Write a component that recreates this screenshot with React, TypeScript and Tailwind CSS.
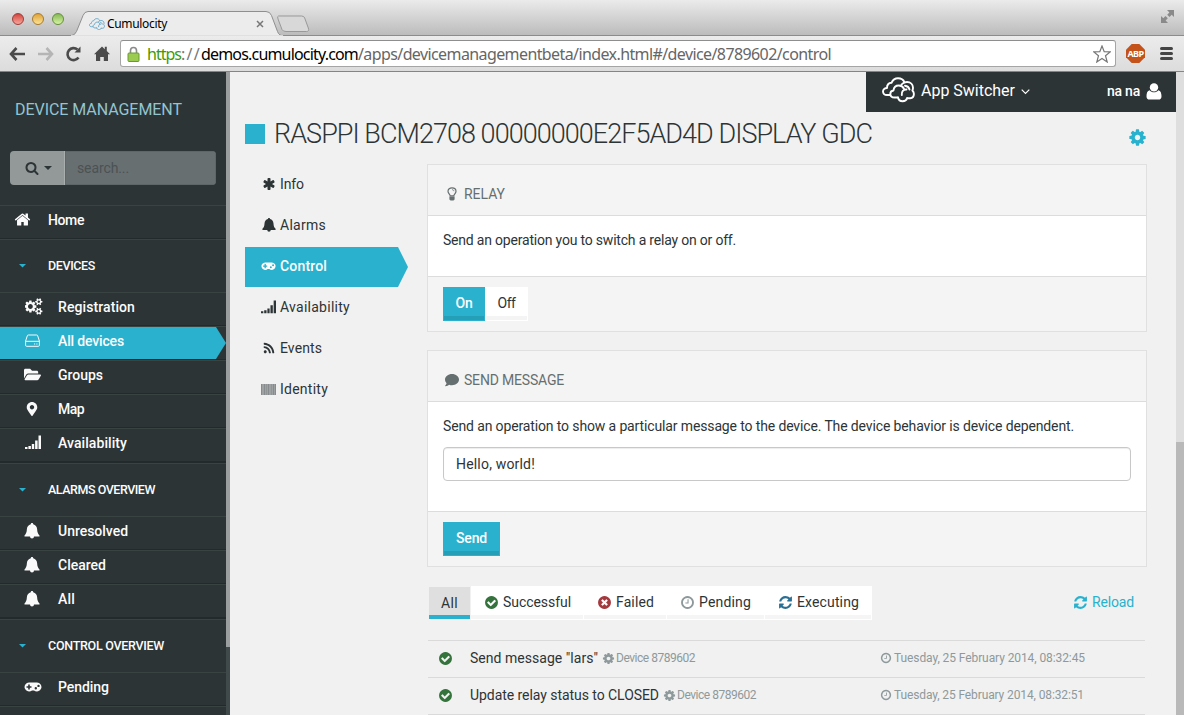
import { useLayoutEffect, useRef, useState } from "react";
import type { ReactNode } from "react";
import { FaComment, FaFolderOpen, FaMapMarkerAlt, FaRss } from "react-icons/fa";

/* Text run tracked so that it fills a given width. */
function T({ w, c = "", children }: { w: number; c?: string; children: string }) {
  const ref = useRef<HTMLSpanElement>(null);
  const [ls, setLs] = useState(0);
  useLayoutEffect(() => {
    if (ref.current) setLs((w - ref.current.getBoundingClientRect().width) / children.length);
  }, []);
  return (
    <span ref={ref} className={`shrink-0 whitespace-pre ${c}`} style={{ letterSpacing: `${ls}px` }}>
      {children}
    </span>
  );
}

const CIRCLE = "q0 209-103 385.5t-279.5 279.5-385.5 103-385.5-103-279.5-279.5-103-385.5 103-385.5 279.5-279.5 385.5-103 385.5 103 279.5 279.5 103 385.5z";
const SMALL_COG =
  "v140q0 16-149 31-12 27-30 52 51 113 51 138 0 4-4 7-122 71-124 71-8 0-46-47t-52-68q-20 2-30 2t-30-2q-14 21-52 68t-46 47q-2 0-124-71-4-3-4-7 0-25 51-138-18-25-30-52-149-15-149-31v-140q0-16 149-31 13-29 30-52-51-113-51-138 0-4 4-7 4-2 35-20t59-34 30-16q8 0 46 46.5t52 67.5q20-2 30-2t30 2q51-71 92-112l6-2q4 0 124 70 4 3 4 7 0 25-51 138 17 23 30 52 149 15 149 31z";
const COGS =
  "M832 896q0-106-75-181t-181-75-181 75-75 181 75 181 181 75 181-75 75-181zm768 512q0-52-38-90t-90-38-90 38-38 90q0 53 37.5 90.5t90.5 37.5 90.5-37.5 37.5-90.5zm0-1024q0-52-38-90t-90-38-90 38-38 90q0 53 37.5 90.5t90.5 37.5 90.5-37.5 37.5-90.5zm-384 421v185q0 10-7 19.5t-16 10.5l-155 24q-11 35-32 76 34 48 90 115 7 11 7 20 0 12-7 19-23 30-82.5 89.5t-78.5 59.5q-11 0-21-7l-115-90q-37 19-77 31-11 108-23 155-7 24-30 24h-186q-11 0-20-7.5t-10-17.5l-23-153q-34-10-75-31l-118 89q-7 7-20 7-11 0-21-8-144-133-144-160 0-9 7-19 10-14 41-53t47-61q-23-44-35-82l-152-24q-10-1-17-9.5t-7-19.5v-185q0-10 7-19.5t16-10.5l155-24q11-35 32-76-34-48-90-115-7-11-7-20 0-12 7-20 22-30 82-89t79-59q11 0 21 7l115 90q34-18 77-32 11-108 23-154 7-24 30-24h186q11 0 20 7.5t10 17.5l23 153q34 10 75 31l118-89q8-7 20-7 11 0 21 8 144 133 144 160 0 8-7 19-12 16-42 54t-45 60q23 48 34 82l152 23q10 2 17 10.5t7 19.5zm640 533" +
  SMALL_COG +
  "m0-1024" +
  SMALL_COG;

const P = {
  search:
    "M1216 832q0-185-131.5-316.5t-316.5-131.5-316.5 131.5-131.5 316.5 131.5 316.5 316.5 131.5 316.5-131.5 131.5-316.5zm512 832q0 52-38 90t-90 38q-54 0-90-38l-343-342q-179 124-399 124-143 0-273.5-55.5t-225-150-150-225-55.5-273.5 55.5-273.5 150-225 225-150 273.5-55.5 273.5 55.5 225 150 150 225 55.5 273.5q0 220-124 399l343 343q37 37 37 90z",
  home:
    "M1472 992v480q0 26-19 45t-45 19h-384v-384h-256v384h-384q-26 0-45-19t-19-45v-480q0-1 .5-3t.5-3l575-474 575 474q1 2 1 6zm223-69l-62 74q-8 9-21 11h-3q-13 0-21-7l-692-577-692 577q-12 8-24 7-13-2-21-11l-62-74q-8-10-7-23.5t11-21.5l719-599q32-26 76-26t76 26l244 204v-195q0-14 9-23t23-9h192q14 0 23 9t9 23v408l219 182q10 8 11 21.5t-7 23.5z",
  check:
    "M1412 734q0-28-18-46l-91-90q-19-19-45-19t-45 19l-408 407-226-226q-19-19-45-19t-45 19l-91 90q-18 18-18 46 0 27 18 45l362 362q19 19 45 19 27 0 46-19l543-543q18-18 18-45zm252 162" + CIRCLE,
  times:
    "M1277 1122q0-26-19-45l-181-181 181-181q19-19 19-45 0-27-19-46l-90-90q-19-18-46-18-26 0-45 18l-181 181-181-181q-19-18-45-18-27 0-46 18l-90 90q-19 19-19 46 0 26 19 45l181 181-181 181q-19 19-19 45 0 27 19 46l90 90q19 18 46 18 26 0 45-18l181-181 181 181q19 18 45 18 27 0 46-18l90-90q19-19 19-46zm387-226" + CIRCLE,
  clock:
    "M1024 544v448q0 14-9 23t-23 9h-320q-14 0-23-9t-9-23v-64q0-14 9-23t23-9h224v-352q0-14 9-23t23-9h64q14 0 23 9t9 23zm416 352q0-148-73-273t-198-198-273-73-273 73-198 198-73 273 73 273 198 198 273 73 273-73 198-198 73-273zm224 0" + CIRCLE,
  refresh:
    "M1639 1056q0 5-1 7-64 268-268 434.5t-478 166.5q-146 0-282.5-55t-243.5-157l-129 129q-19 19-45 19t-45-19-19-45v-448q0-26 19-45t45-19h448q26 0 45 19t19 45-19 45l-137 137q71 66 161 102t187 36q134 0 250-65t186-179q11-17 53-117 8-23 30-23h192q13 0 22.5 9.5t9.5 22.5zm25-800v448q0 26-19 45t-45 19h-448q-26 0-45-19t-19-45 19-45l138-138q-148-137-349-137-134 0-250 65t-186 179q-11 17-53 117-8 23-30 23h-199q-13 0-22.5-9.5t-9.5-22.5v-7q65-268 270-434.5t480-166.5q146 0 284 55.5t245 156.5l130-129q19-19 45-19t45 19 19 45z",
  cog:
    "M1152 896q0-106-75-181t-181-75-181 75-75 181 75 181 181 75 181-75 75-181zm512-109v222q0 12-8 23t-20 13l-185 28q-19 54-39 91 35 50 107 138 10 12 10 25t-9 23q-27 37-99 108t-94 71q-12 0-26-9l-138-108q-44 23-91 38-16 136-29 186-7 28-36 28h-222q-14 0-24.5-8.5t-11.5-21.5l-28-184q-49-16-90-37l-141 107q-10 9-25 9-14 0-25-11-126-114-165-168-7-10-7-23 0-12 8-23 15-21 51-66.5t54-70.5q-27-50-41-99l-183-27q-13-2-21-12.5t-8-23.5v-222q0-12 8-23t19-13l186-28q14-46 39-92-40-57-107-138-10-12-10-24 0-10 9-23 26-36 98.5-107.5t94.5-71.5q13 0 26 10l138 107q44-23 91-38 16-136 29-186 7-28 36-28h222q14 0 24.5 8.5t11.5 21.5l28 184q49 16 90 37l142-107q9-9 24-9 13 0 25 10 129 119 165 170 7 8 7 22 0 12-8 23-15 21-51 66.5t-54 70.5q26 50 41 98l183 28q13 2 21 12.5t8 23.5z",
  asterisk:
    "M1546 1050q46 26 59.5 77.5t-12.5 97.5l-64 110q-26 46-77.5 59.5t-97.5-12.5l-266-153v307q0 52-38 90t-90 38h-128q-52 0-90-38t-38-90v-307l-266 153q-46 26-97.5 12.5t-77.5-59.5l-64-110q-26-46-12.5-97.5t59.5-77.5l266-154-266-154q-46-26-59.5-77.5t12.5-97.5l64-110q26-46 77.5-59.5t97.5 12.5l266 153v-307q0-52 38-90t90-38h128q52 0 90 38t38 90v307l266-153q46-26 97.5-12.5t77.5 59.5l64 110q26 46 12.5 97.5t-59.5 77.5l-266 154z",
};

function G({ n, s = 15, c = "" }: { n: keyof typeof P; s?: number; c?: string }) {
  return (
    <svg viewBox="0 0 1792 1792" width={s} height={s} className={`shrink-0 ${c}`}>
      <path d={P[n]} fill="currentColor" />
    </svg>
  );
}

function Cogs() {
  return (
    <svg viewBox="0 0 1920 1792" width="18" height="17" className="shrink-0">
      <path d={COGS} fill="currentColor" />
    </svg>
  );
}

function Bell({ s = 16 }: { s?: number }) {
  return (
    <svg viewBox="0 0 16 16" width={s} height={s} className="shrink-0" fill="currentColor">
      <path d="M8 0c.8 0 1.200.5 1.200 1.200 2.300.6 3.700 2.300 3.900 4.900.2 3.200.8 5 2.400 6.300v1.200H10a2 2 0 0 1-4 0H.5v-1.200c1.600-1.300 2.200-3.100 2.400-6.300.2-2.600 1.600-4.300 3.900-4.900C6.800.5 7.200 0 8 0z" />
    </svg>
  );
}

function Gamepad({ s = 17 }: { s?: number }) {
  return (
    <svg viewBox="0 0 18 10" width={s} height={(s * 10) / 18} className="shrink-0">
      <path
        fill="currentColor"
        fillRule="evenodd"
        d="M5 .5h8a4.500 4.500 0 1 1-3 7.900H8A4.500 4.500 0 1 1 5 .5zM4.200 2.500v1.700H2.500v1.600h1.700v1.700h1.600V5.800h1.700V4.200H5.800V2.500zM11.800 5a1.200 1.200 0 1 0 .01 2.400A1.200 1.200 0 0 0 11.800 5zM14.500 2.700a1.200 1.200 0 1 0 .01 2.400A1.200 1.200 0 0 0 14.500 2.700z"
      />
    </svg>
  );
}

function Signal({ s = 16 }: { s?: number }) {
  return (
    <svg viewBox="0 0 16 14" width={s} height={(s * 14) / 16} className="shrink-0" fill="currentColor">
      <path d="M0 12h2.500v2H0zM3.400 11h2.500v3H3.400zM6.800 9h2.400v5H6.800zM10.100 5.500h2.500V14h-2.500zM13.500.5H16V14h-2.500z" />
    </svg>
  );
}

function Drive() {
  return (
    <svg viewBox="0 0 15 13" width="15" height="13" fill="none" stroke="currentColor">
      <path d="M3.300 1h8.400q.8 0 1 .8L14.400 7v4.300q0 1-1 1H1.600q-1 0-1-1V7l1.700-5.200q.2-.8 1-.8zM.8 7.300h13.400M9 10h1.200M11.300 10h1.200" />
    </svg>
  );
}

function Bulb() {
  return (
    <svg viewBox="0 0 10 14" width="10" height="14" fill="none" stroke="currentColor" strokeWidth="1.200">
      <path d="M3.200 8.800C3 7 1 6.300 1 4.200 1 2.200 2.700.8 5 .8s4 1.400 4 3.400c0 2.100-2 2.800-2.200 4.600z" />
      <path d="M5 2.700c1.200 0 1.900.6 1.900 1.500" strokeWidth=".8" />
      <path d="M3 10h4v2.300L6.200 13H3.800L3 12.300z" fill="currentColor" />
    </svg>
  );
}

function Barcode() {
  return (
    <svg viewBox="0 0 15 11" width="15" height="11" fill="currentColor">
      <path d="M0 0h15v11H0z" opacity=".42" />
      <path d="M0 0h1v11H0zM3 0h1v11H3zM5 0h.6v11H5zM7 0h1v11H7zM10 0h.6v11H10zM12 0h1v11h-1zM14 0h1v11h-1z" opacity=".2" />
    </svg>
  );
}

function User() {
  return (
    <svg viewBox="0 0 16 17" width="16" height="17" fill="currentColor">
      <circle cx="8" cy="4.400" r="4.200" />
      <path d="M3.700 7.200C1.200 7.700.5 10.300.5 13.200c0 2.200 1.100 3.400 3 3.400h9c1.900 0 3-1.200 3-3.400 0-2.900-.7-5.500-3.200-6-1.100 1.300-2.500 2.100-4.300 2.100S4.800 8.500 3.700 7.200z" />
    </svg>
  );
}

function Clouds({ w, sw }: { w: number; sw: number }) {
  return (
    <svg
      viewBox="0 0 33 26"
      width={w}
      height={(w * 26) / 33}
      className="shrink-0"
      fill="none"
      stroke="currentColor"
      strokeWidth={sw}
      strokeLinecap="round"
      strokeLinejoin="round"
    >
      <path d="M8 18H5c-2.500 0-4-1.500-4-3.500C1 12.300 2.800 11 5 11c0-3.500 1.500-5 4.500-5.200C11 2.500 13.500 1.300 16 1.300c3 0 5.500 1.700 6.500 4" />
      <path d="M19.500 7.500C21 5.700 23 5 25 5c3.500 0 6 2.500 6 5.800 0 1.200-.2 2-.6 2.700 1 1 1.500 2.200 1.500 3.500 0 2.500-1.500 4-3.700 4.200h-3.100" />
      <path d="M16 20.500h-3.500C10 20.500 8.300 19 8.300 17c0-2 1.300-3.300 3.200-3.500.3-3 2.300-5 5.300-5 2.500 0 4.300 1.200 5.200 3.300" />
      <path d="M16 20.500c.5 2.200 2.200 3.800 4.600 3.800 2.300 0 3.900-1.300 4.500-3.100M19.800 18c-.4-3.500 1.500-5.700 4.700-5.500M23 8.700c2.300.2 4 1.700 4.500 3.800" />
    </svg>
  );
}

function Caret({ c, w = 8 }: { c: string; w?: number }) {
  return (
    <svg viewBox="0 0 8 4" width={w} height={w / 2} className={`shrink-0 ${c}`}>
      <path d="M0 0h8L4 4z" fill="currentColor" />
    </svg>
  );
}

function BrowserChrome() {
  return (
    <header className="h-[72px] shrink-0 font-['Noto_Sans',sans-serif]">
      <div className="relative flex h-9 items-start border-b border-[#8c8c8c] bg-linear-to-b from-[#ebebeb] to-[#bcbcbc]">
        <div className="flex gap-[8px] pt-[13px] pl-3">
          <i className="size-3 rounded-full border border-[#9c3d38] bg-linear-to-b from-[#d2433d] to-[#f5a49b]" />
          <i className="size-3 rounded-full border border-[#a77a2e] bg-linear-to-b from-[#dfa334] to-[#fbe392]" />
          <i className="size-3 rounded-full border border-[#658f3e] bg-linear-to-b from-[#86b954] to-[#d5f3a3]" />
        </div>
        <svg className="absolute top-[11px] left-[70px]" width="245" height="25" viewBox="0 0 245 25">
          <path d="M208.500 5h23q2.500 0 3.200 2l3.600 10q1.200 3.500-1.800 3.500h-20.500q-3 0-4-2l-4-10.500q-1-3 .5-3z" fill="#d8d8d8" stroke="#999" />
          <path d="M0 25q5-.5 6.500-4.500l6.500-16Q14.500.5 18 .5h178q4 0 5.500 4l6 16Q209 25 214 25z" fill="#ececec" stroke="#8f8f8f" />
          <path d="M1 24.900h212" stroke="#ececec" strokeWidth="1.200" />
        </svg>
        <div className="absolute top-[15px] left-[89px] flex h-[18px] items-center text-xs text-black">
          <span className="text-[#6aa9c9]"><Clouds w={16} sw={2} /></span>
          <T w={60} c="ml-[2px]">Cumulocity</T>
          <svg width="8" height="8" viewBox="0 0 8 8" className="ml-[89px]" stroke="#777" strokeWidth="1.500">
            <path d="M1 1l6 6M7 1L1 7" />
          </svg>
        </div>
        <svg className="absolute top-[9px] right-[9px]" width="15" height="15" viewBox="0 0 15 15" fill="#8a8a8a">
          <path d="M7 1h7v7l-2.300-2.200L9.500 8 7.200 5.700l2.200-2.300zM8 14H1V7l2.300 2.300L5.500 7l2.300 2.300-2.200 2.300z" />
        </svg>
      </div>
      <div className="flex h-9 items-center border-b border-[#858585] bg-linear-to-b from-[#ececec] to-[#dcdcdc] text-[#4b4b4b]">
        <svg width="16" height="14" viewBox="0 0 16 14" className="ml-[9px]" fill="none" stroke="currentColor" strokeWidth="2.600">
          <path d="M7.500 1L2 7l5.500 6M2 7h14" />
        </svg>
        <svg width="16" height="14" viewBox="0 0 16 14" className="ml-[13px]" fill="none" stroke="#b5b5b5" strokeWidth="2.600">
          <path d="M8.500 1L14 7l-5.500 6M14 7H0" />
        </svg>
        <svg width="17" height="16" viewBox="0 0 17 16" className="ml-[11px]" fill="none" stroke="currentColor" strokeWidth="2.600">
          <path d="M13.500 11.500A6 6 0 1 1 12.500 3.600" />
          <path d="M15.500.5v6h-6z" fill="currentColor" stroke="none" />
        </svg>
        <svg width="16" height="15" viewBox="0 0 16 15" className="ml-[12px]" fill="currentColor">
          <path d="M8 .5l2.800 2.700V.8h2v4.300L16 8.300h-2V15H9.800v-4H6.200v4H2V8.300H0z" />
        </svg>
        <div className="ml-[10px] flex h-[27px] w-[996px] items-center rounded-[3px] border border-[#a5a5a5] border-t-[#8e8e8e] bg-white pr-1 pl-[6px] text-base">
          <svg width="13" height="16" viewBox="0 0 13 16">
            <path d="M3.500 8V4.500a3 3 0 0 1 6 0V8" fill="none" stroke="#8a8a8a" strokeWidth="1.600" />
            <rect x="1" y="7" width="11" height="8.500" rx="1" fill="#9ccb52" stroke="#6a9a2d" />
          </svg>
          <span className="ml-[7px] flex">
            <T w={34} c="text-[#3f9a06]">https</T>
            <T w={20} c="text-[#777]">://</T>
            <T w={157} c="text-black">demos.cumulocity.com</T>
            <T w={473} c="text-[#666]">/apps/devicemanagementbeta/index.html#/device/8789602/control</T>
          </span>
          <svg width="18" height="18" viewBox="0 0 18 18" className="ml-auto" fill="#fff" stroke="#777" strokeWidth="1.200">
            <path d="M9 1l2.200 5.600 6 .3-4.700 3.800L14.200 17 9 13.500 3.800 17l1.700-6.300L.8 6.900l6-.3z" />
          </svg>
        </div>
        <div className="ml-[10px] flex size-[19px] items-center justify-center bg-[#c3521b] text-[9px] font-bold text-white [clip-path:polygon(30%_0,70%_0,100%_30%,100%_70%,70%_100%,30%_100%,0_70%,0_30%)]">
          <T w={16}>ABP</T>
        </div>
        <div className="ml-[15px] flex flex-col gap-[2px]">
          <i className="h-[3px] w-[13px] rounded-sm bg-[#444]" />
          <i className="h-[3px] w-[13px] rounded-sm bg-[#444]" />
          <i className="h-[3px] w-[13px] rounded-sm bg-[#444]" />
        </div>
      </div>
    </header>
  );
}

function MenuItem({ icon, label, w, active, last }: { icon: ReactNode; label: string; w: number; active?: boolean; last?: boolean }) {
  return (
    <>
      <div className="h-[34px] shrink-0 border-t border-b border-t-[#384342] border-b-[#222a2b]">
        <div
          className={`flex h-8 items-center pb-[5px] ${active ? "bg-[#29b1cd] [clip-path:polygon(0_0,216px_0,226px_50%,216px_100%,0_100%)]" : ""}`}
        >
          <span className="ml-6 flex w-[34px] items-center text-[#fafafa]">{icon}</span>
          <T w={w}>{label}</T>
        </div>
      </div>
      {last && <div className="h-px shrink-0 bg-[#222a2b]" />}
    </>
  );
}

function MenuHeader({ label, w }: { label: string; w: number }) {
  return (
    <div className="flex h-[53px] shrink-0 items-center border-t border-[#384342] text-[12.500px]">
      <Caret c="ml-[19px] text-[#29b1cd]" w={7} />
      <T w={w} c="ml-[22px]">{label}</T>
    </div>
  );
}

function Sidebar() {
  return (
    <aside className="flex w-[226px] shrink-0 flex-col overflow-hidden bg-[#2d3436] text-sm font-medium text-[#fcfcfc]">
      <div className="flex h-[79px] shrink-0 items-center pb-[3px] pl-[15px] text-base font-normal text-[#93c5d0]">
        <T w={167}>DEVICE MANAGEMENT</T>
      </div>
      <div className="mx-[10px] flex h-[34px] shrink-0 overflow-hidden rounded-[4px]">
        <div className="flex w-[55px] items-center border-r border-[#a9aeae] bg-[#939999] pl-[15px] text-[#2d3436]">
          <G n="search" s={14} />
          <Caret c="ml-[5px]" w={8} />
        </div>
        <div className="flex flex-1 items-center bg-[#686f71] pb-px pl-3 text-sm font-normal text-[#4b5254] shadow-[inset_0_0_0_1px_#5f6668]">
          <T w={52}>search...</T>
        </div>
      </div>
      <div className="mt-5 flex h-[34px] shrink-0 items-center border-t border-b border-t-[#384342] border-b-[#222a2b] pb-[5px]">
        <span className="ml-[14px] flex w-[34px]"><G n="home" s={17} /></span>
        <T w={36}>Home</T>
      </div>
      <MenuHeader label="DEVICES" w={47} />
      <MenuItem icon={<span className="ml-px flex"><Cogs /></span>} label="Registration" w={77} />
      <MenuItem icon={<span className="ml-px flex"><Drive /></span>} label="All devices" w={66} active />
      <MenuItem icon={<FaFolderOpen size={17} />} label="Groups" w={45} />
      <MenuItem icon={<FaMapMarkerAlt size={14} className="ml-px" />} label="Map" w={26} />
      <MenuItem icon={<span className="mb-px ml-px flex"><Signal /></span>} label="Availability" w={69} last />
      <MenuHeader label="ALARMS OVERVIEW" w={107} />
      <MenuItem icon={<Bell />} label="Unresolved" w={70} />
      <MenuItem icon={<Bell />} label="Cleared" w={48} />
      <MenuItem icon={<Bell />} label="All" w={17} last />
      <MenuHeader label="CONTROL OVERVIEW" w={116} />
      <MenuItem icon={<Gamepad s={18} />} label="Pending" w={51} />
      <div className="h-[9px] shrink-0 border-t border-[#384342]" />
    </aside>
  );
}

function NavItem({ icon, label, w, active }: { icon: ReactNode; label: string; w: number; active?: boolean }) {
  return (
    <div
      className={`mb-px flex h-10 items-center pb-[2px] pl-4 ${active ? "bg-[#29b1cd] font-medium text-white [clip-path:polygon(0_0,153px_0,100%_50%,153px_100%,0_100%)]" : ""}`}
    >
      <span className="flex w-[15px] items-center justify-center">{icon}</span>
      <T w={w} c="ml-[4px]">{label}</T>
    </div>
  );
}

function Panel({ icon, title, w, body, footer, bodyClass }: { icon: ReactNode; title: string; w: number; body: ReactNode; footer: ReactNode; bodyClass: string }) {
  return (
    <section className="mb-[18px] border border-[#e0e0e0] bg-white">
      <div className="flex h-[51px] items-center border-b border-[#dcdcdc] bg-[#f4f4f4] pt-[8px] pl-4 text-[#666f70]">
        <span className="flex w-[15px] items-center justify-center">{icon}</span>
        <T w={w} c="ml-[5px]">{title}</T>
      </div>
      <div className={`px-[15px] pt-[14px] ${bodyClass}`}>{body}</div>
      <div className="flex h-[55px] items-start border-t border-[#dcdcdc] bg-[#f4f4f4] pt-[10px] pl-[15px]">{footer}</div>
    </section>
  );
}

function Button({ label, w, className, strip }: { label: string; w: number; className: string; strip: string }) {
  return (
    <button className={`flex h-[34px] flex-col items-center p-px pt-0 ${className}`}>
      <span className="flex h-[29px] items-center pt-[3px]"><T w={w}>{label}</T></span>
      <span className={`h-1 w-full ${strip}`} />
    </button>
  );
}

function Filter({ icon, label, w, className }: { icon: ReactNode; label: string; w: number; className: string }) {
  return (
    <button className={`flex flex-col bg-white pr-px pb-px ${className}`}>
      <span className="flex h-[29px] items-center pt-[3px] pl-[13px]">
        {icon}
        <T w={w} c="ml-[4px]">{label}</T>
      </span>
      <span className="h-1 w-full bg-[#f5f5f5]" />
    </button>
  );
}

function LogRow({ label, w, time, tw }: { label: string; w: number; time: string; tw: number }) {
  return (
    <div className="flex h-[37px] items-center border-t border-[#dadada] pb-[2px] text-[#2d3436]">
      <G n="check" s={15} c="ml-[10px] text-[#34733c]" />
      <T w={w} c="ml-[17px]">{label}</T>
      <span className="flex flex-1 items-center text-xs text-[#8e999b]">
        <G n="cog" s={13} c="ml-1" />
        <T w={79} c="ml-px">Device 8789602</T>
      </span>
      <span className="flex w-[265px] items-center text-xs text-[#8e999b]">
        <G n="clock" s={12} />
        <T w={tw} c="ml-[2px]">{time}</T>
      </span>
    </div>
  );
}

function Main() {
  return (
    <main className="flex w-[946px] shrink-0 flex-col overflow-hidden bg-[#f1f1f1] text-sm text-[#2d3436]">
      <div className="flex h-10 w-[310px] shrink-0 items-center self-end bg-[#2d3436] pb-[3px] pl-4 text-white">
        <span className="mb-px flex"><Clouds w={33} sw={1.9} /></span>
        <T w={94} c="ml-[6px] text-base">App Switcher</T>
        <svg width="9" height="6" viewBox="0 0 9 6" className="mt-[2px] ml-[6px]" fill="none" stroke="currentColor" strokeWidth="1.200">
          <path d="M.7.7l3.800 3.800L8.300.7" />
        </svg>
        <T w={33} c="mt-px ml-[77px] font-medium">na na</T>
        <span className="mt-[2px] ml-[6px]"><User /></span>
      </div>
      <div className="flex h-[52px] shrink-0 items-center pb-[9px] pl-[15px]">
        <div className="size-5 bg-[#29b1cd]" />
        <T w={598} c="mt-[2px] ml-[9px] text-[27px] font-light">RASPPI BCM2708 00000000E2F5AD4D DISPLAY GDC</T>
        <span className="mt-2 ml-[256px] text-[#29b1cd]"><G n="cog" s={19} /></span>
      </div>
      <div className="flex">
        <nav className="mt-px mr-[19px] ml-[15px] w-[163px] shrink-0">
          <NavItem icon={<G n="asterisk" s={14} />} label="Info" w={24} />
          <NavItem icon={<Bell s={14} />} label="Alarms" w={46} />
          <NavItem icon={<Gamepad s={15} />} label="Control" w={47} active />
          <NavItem icon={<Signal s={15} />} label="Availability" w={70} />
          <NavItem icon={<FaRss size={12} />} label="Events" w={42} />
          <NavItem icon={<Barcode />} label="Identity" w={48} />
        </nav>
        <div className="w-[720px] shrink-0">
          <Panel
            icon={<Bulb />}
            title="RELAY"
            w={41}
            bodyClass="h-[60px]"
            body={<T w={293}>Send an operation you to switch a relay on or off.</T>}
            footer={
              <>
                <Button label="On" w={17} className="w-[42px] bg-[#29b1cd] font-medium text-white" strip="bg-[#259fb8]" />
                <Button label="Off" w={18} className="w-[43px] bg-white" strip="bg-[#f4f4f4]" />
              </>
            }
          />
          <Panel
            icon={<FaComment size={14} />}
            title="SEND MESSAGE"
            w={100}
            bodyClass="h-[109px]"
            body={
              <div className="flex flex-col">
                <T w={631} c="self-start">Send an operation to show a particular message to the device. The device behavior is device dependent.</T>
                <div className="mt-[11px] flex h-[34px] items-center rounded-[4px] border border-[#c8c8c8] bg-white pb-px pl-3 shadow-[inset_0_1px_1px_rgba(0,0,0,0.075)]">
                  <T w={79}>Hello, world!</T>
                </div>
              </div>
            }
            footer={<Button label="Send" w={31} className="w-[57px] bg-[#29b1cd] font-medium text-white" strip="bg-[#259fb8]" />}
          />
          <div className="flex h-[55px] w-[718px] items-start pl-[2px]">
            <div className="mt-[2px] flex h-8 w-[41px] items-center justify-center border-b-4 border-[#29b1cd] bg-[#dfdfdf] pt-[3px]">
              <T w={17}>All</T>
            </div>
            <div className="mt-px ml-px flex h-[34px]">
              <Filter icon={<G n="check" c="text-[#34733c]" />} label="Successful" w={68} className="w-[113px]" />
              <Filter icon={<G n="times" c="text-[#a33b3e]" />} label="Failed" w={38} className="w-[83px]" />
              <Filter icon={<G n="clock" c="text-[#8e999b]" />} label="Pending" w={52} className="w-[98px]" />
              <Filter icon={<G n="refresh" c="text-[#2a6f94]" />} label="Executing" w={62} className="w-[107px]" />
            </div>
            <div className="ml-auto flex h-[34px] items-center pr-[11px] text-[#29b1cd]">
              <G n="refresh" s={15} />
              <T w={42} c="ml-[4px]">Reload</T>
            </div>
          </div>
          <div className="ml-px w-[717px]">
            <LogRow label={'Send message "lars"'} w={128} time="Tuesday, 25 February 2014, 08:32:45" tw={191} />
            <LogRow label="Update relay status to CLOSED" w={189} time="Tuesday, 25 February 2014, 08:32:51" tw={190} />
            <div className="h-px bg-[#dadada]" />
          </div>
        </div>
      </div>
    </main>
  );
}

export default function App() {
  return (
    <div className="flex h-[715px] w-[1184px] flex-col overflow-hidden bg-white font-[Roboto,sans-serif]">
      <BrowserChrome />
      <div className="flex h-[643px]">
        <Sidebar />
        <div className="w-1 shrink-0 bg-[#404a4b]">
          <div className="h-[575px] bg-[#9a9e9f]" />
        </div>
        <Main />
        <div className="w-2 shrink-0 bg-[#b9b9b9]">
          <div className="h-[370px] bg-[#dedede]" />
        </div>
      </div>
    </div>
  );
}
